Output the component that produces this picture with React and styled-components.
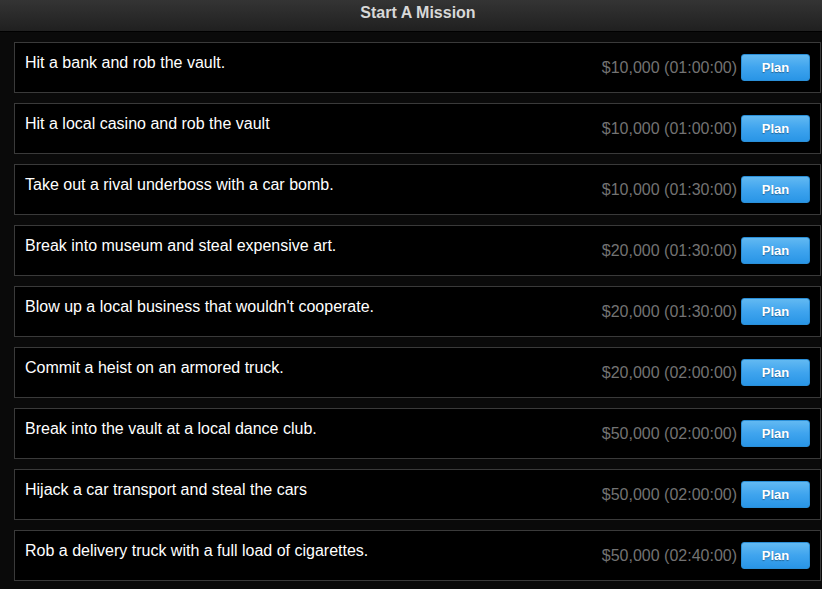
import React from "react";
import styled, { createGlobalStyle } from "styled-components";

const Global = createGlobalStyle`
  html, body { margin: 0; padding: 0; background: #0a0a0a; }
  body { font-family: "Liberation Sans", Arial, sans-serif; }
`;

const Page = styled.div`
  width: 822px;
  height: 589px;
  background: #0a0a0a;
  overflow: hidden;
`;

const Header = styled.div`
  height: 32px;
  border-bottom: 1px solid #000;
  background: linear-gradient(to bottom, #343434 0%, #2a2a2a 50%, #202020 100%);
  display: flex;
  align-items: center;
  justify-content: center;
  padding-left: 14px;
  color: #d8d8d8;
  font-weight: bold;
  font-size: 16px;
  padding-bottom: 6px;
  box-sizing: border-box;
`;

const List = styled.div`
  display: flex;
  flex-direction: column;
  gap: 10px;
  padding: 10px 1px 0 14px;
`;

const Row = styled.div`
  display: flex;
  align-items: flex-start;
  justify-content: space-between;
  border: 1px solid #3a3a3a;
  background: #000;
  padding: 10px;
`;

const Title = styled.div`
  color: #fff;
  font-size: 16px;
  line-height: 20px;
`;

const Right = styled.div`
  display: flex;
  align-items: center;
  gap: 4px;
  margin: 1px 0;
`;

const Price = styled.span`
  color: #737373;
  font-size: 16px;
  line-height: 20px;
`;

const PlanButton = styled.button`
  width: 69px;
  height: 27px;
  border: 1px solid #2a8fd8;
  border-radius: 3px;
  background: linear-gradient(to bottom, #62b9f2 0%, #3fa4ee 50%, #2995e6 100%);
  color: #fff;
  font-family: "Liberation Sans", Arial, sans-serif;
  font-weight: bold;
  font-size: 13px;
  text-shadow: 0 1px 1px rgba(0, 0, 0, 0.35);
  padding: 0;
  cursor: pointer;
`;

const missions = [
  ["Hit a bank and rob the vault.", "$10,000 (01:00:00)"],
  ["Hit a local casino and rob the vault", "$10,000 (01:00:00)"],
  ["Take out a rival underboss with a car bomb.", "$10,000 (01:30:00)"],
  ["Break into museum and steal expensive art.", "$20,000 (01:30:00)"],
  ["Blow up a local business that wouldn't cooperate.", "$20,000 (01:30:00)"],
  ["Commit a heist on an armored truck.", "$20,000 (02:00:00)"],
  ["Break into the vault at a local dance club.", "$50,000 (02:00:00)"],
  ["Hijack a car transport and steal the cars", "$50,000 (02:00:00)"],
  ["Rob a delivery truck with a full load of cigarettes.", "$50,000 (02:40:00)"],
];

export default function App() {
  return (
    <Page>
      <Global />
      <Header>Start A Mission</Header>
      <List>
        {missions.map(([t, p]) => (
          <Row key={t}>
            <Title>{t}</Title>
            <Right>
              <Price>{p}</Price>
              <PlanButton>Plan</PlanButton>
            </Right>
          </Row>
        ))}
      </List>
    </Page>
  );
}
